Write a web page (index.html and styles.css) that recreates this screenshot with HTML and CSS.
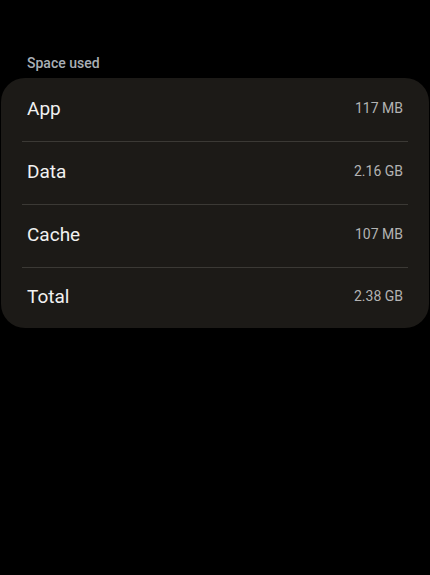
FILE: index.html
```html
<!DOCTYPE html>
<html lang="en">
<head>
  <meta charset="UTF-8">
  <title>Storage</title>
  <link rel="stylesheet" href="styles.css">
</head>
<body>
  <div class="section">
    <div class="section-title">Space used</div>
    <div class="card">
      <div class="row">
        <span class="row-label">App</span>
        <span class="row-value">117 MB</span>
      </div>
      <div class="row">
        <span class="row-label">Data</span>
        <span class="row-value">2.16 GB</span>
      </div>
      <div class="row">
        <span class="row-label">Cache</span>
        <span class="row-value">107 MB</span>
      </div>
      <div class="row">
        <span class="row-label">Total</span>
        <span class="row-value">2.38 GB</span>
      </div>
    </div>
  </div>
</body>
</html>
```

FILE: styles.css
```css
body {
  margin: 0;
  font-family: Roboto, "Noto Sans", sans-serif;
  background-color: #000;
  height: 100vh;
}

.section {
  padding: 54px 1px 0 1px;
}

.section-title {
  font-size: 14px;
  font-weight: 500;
  color: #a9afb6;
  padding-left: 26px;
  height: 24px;
  line-height: 18px;
}

.card {
  background-color: #1c1a17;
  border-radius: 24px;
  padding: 1px 21px 0 21px;
}

.row {
  display: flex;
  justify-content: space-between;
  align-items: center;
  height: 58px;
  padding: 0 5px 4px 5px;
  border-bottom: 1px solid #3b3935;
}

.row:last-child {
  border-bottom: none;
  height: 56px;
}

.row-label {
  font-size: 19px;
  color: #f1f1f1;
}

.row-value {
  font-size: 14px;
  color: #b3b3b3;
}
```
